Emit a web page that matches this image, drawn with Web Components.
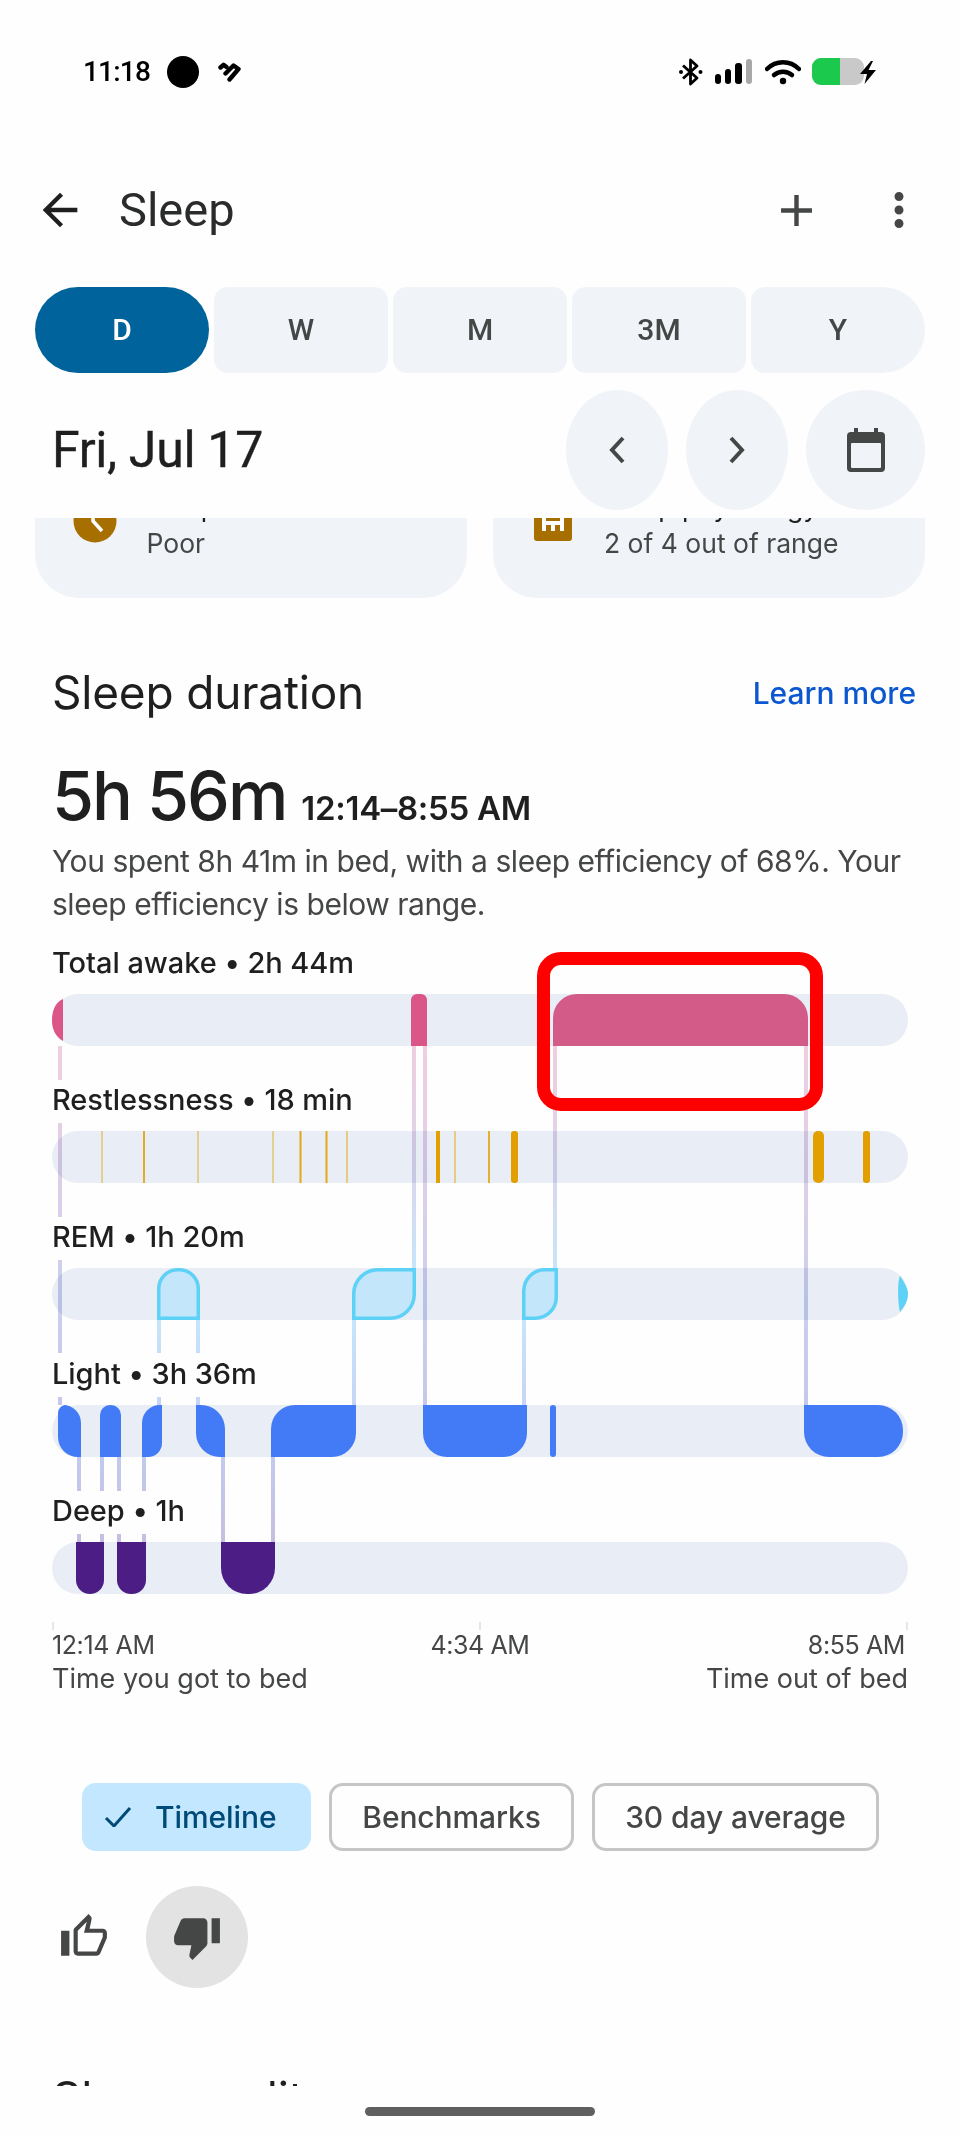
<!DOCTYPE html>
<html lang="en"><head><meta charset="utf-8"><title>Sleep</title>
<style>
html,body{margin:0;padding:0;background:#fffefe}
body{width:960px;height:2137px;overflow:hidden;font-family:Inter,"Liberation Sans",sans-serif;color:#1f1f1f}
phone-screen{display:block}
</style></head><body>
<phone-screen>
  <status-bar></status-bar>
  <app-bar title="Sleep"></app-bar>
  <range-tabs></range-tabs>
  <date-row label="Fri, Jul 17"></date-row>
  <scroll-area>
    <div style="display:grid;grid-template-columns:432px 432px;column-gap:26px;margin:-52px 35px 0 35px">
      <summary-card heading="Sleep schedule" value="Poor" icon="clock"></summary-card>
      <summary-card heading="Sleep physiology" value="2 of 4 out of range" icon="bars"></summary-card>
    </div>
    <duration-head></duration-head>
    <sleep-chart></sleep-chart>
    <chart-axis></chart-axis>
    <chip-row></chip-row>
    <feedback-row></feedback-row>
    <next-heading>Sleep quality</next-heading>
  </scroll-area>
  <home-bar></home-bar>
</phone-screen>
<script>
const def=(name,html,setup)=>customElements.define(name,class extends HTMLElement{
  connectedCallback(){ if(this.shadowRoot)return; const r=this.attachShadow({mode:'open'});
    r.innerHTML=typeof html==='function'?html(this):html; setup&&setup(r,this);}
});
const mi=(d,s,c='#444746')=>`<svg width="${s}" height="${s}" viewBox="0 0 24 24" fill="${c}" aria-hidden="true"><path d="${d}"/></svg>`;

def('phone-screen',`<style>:host{display:block;width:960px;height:2137px;overflow:hidden}</style><slot></slot>`);

def('status-bar',`<style>
:host{display:flex;align-items:center;height:144px;padding:0 0 0 83px;box-sizing:border-box}
.row{display:flex;align-items:center;width:100%;height:40px}
.t{font:500 28px/32px Roboto,sans-serif;color:#000;width:84px;letter-spacing:-.8px}
.dot{width:32px;height:32px;border-radius:50%;background:#000;flex:none}
.h{margin-left:19px;flex:none;display:block}
.rt{margin-left:auto;display:flex;align-items:center;margin-right:84px}
svg{display:block;flex:none}
</style><div class="row"><span class="t">11:18</span><span class="dot"></span>
<svg class="h" width="24" height="20" viewBox="0 0 24 20" fill="none" stroke="#000" stroke-width="4.400" stroke-linecap="round" stroke-linejoin="round"><path d="M2.500 5.500 5.500 2.800 8.500 5"/><path d="M7.500 11.500 15.500 3.500 20.500 7 11.500 17.500"/></svg>
<div class="rt">
<svg width="24" height="28" viewBox="0 0 24 28" style="margin-right:12px"><path d="M4 7.500 18 20l-6.500 6V2L18 8 4 20.500" fill="none" stroke="#000" stroke-width="2.800" stroke-linejoin="round"/><circle cx="2" cy="14" r="2"/><circle cx="21.500" cy="14" r="2"/></svg>
<svg width="38" height="26" viewBox="0 0 38 26" style="margin-right:12px"><rect x="0" y="15" width="6" height="10" rx="3"/><rect x="10" y="10" width="6" height="15" rx="3"/><rect x="20" y="4" width="7" height="21" rx="3"/><rect x="31" y="0" width="6" height="25" rx="3" fill="#a8a8a8"/></svg>
<svg width="36" height="26" viewBox="0 0 36 26" style="margin-right:11px"><path d="M2 10C11 1 25 1 34 10" fill="none" stroke="#000" stroke-width="4.500" stroke-linecap="round"/><path d="M9 16c5-4.500 13-4.500 18 0" fill="none" stroke="#000" stroke-width="4.500" stroke-linecap="round"/><circle cx="18" cy="22" r="3.200"/></svg>
<svg width="65" height="28" viewBox="0 0 65 28" style="margin-right:-1px"><defs><clipPath id="bc"><rect width="52" height="27" rx="9"/></clipPath></defs><g clip-path="url(#bc)"><rect width="52" height="27" fill="#c9c9c9"/><rect width="28" height="27" fill="#1bc94d"/></g><path d="M59 3 48 16h7l-2.500 10L64 12h-7.500l4.500-9z" fill="#000"/></svg>
</div></div>`);

def('app-bar',t=>`<style>
:host{display:flex;align-items:center;height:132px}
.b{flex:none;display:flex}
.t{font:400 47px/56px Roboto,sans-serif;color:#2a2b2b;margin-left:33px}
.r{margin-left:auto;display:flex;align-items:center}
</style>
<span class="b" style="margin-left:34px">${mi('M20 11H7.830l5.590-5.590L12 4l-8 8 8 8 1.410-1.410L7.830 13H20v-2z',52,'#1f1f1f')}</span>
<span class="t">${t.getAttribute('title')}</span>
<div class="r"><span class="b">${mi('M19 13h-6v6h-2v-6H5v-2h6V5h2v6h6v2z',53)}</span>
<span class="b" style="margin:0 34px 0 49px">${mi('M12 8c1.100 0 2-.9 2-2s-.9-2-2-2-2 .9-2 2 .9 2 2 2zm0 2c-1.100 0-2 .9-2 2s.9 2 2 2 2-.9 2-2-.9-2-2-2zm0 6c-1.100 0-2 .9-2 2s.9 2 2 2 2-.9 2-2-.9-2-2-2z',54)}</span></div>`);

def('range-tabs',`<style>
:host{display:grid;grid-template-columns:repeat(5,174px);column-gap:5px;height:86px;margin:11px 35px 0 35px}
div{display:flex;align-items:center;justify-content:center;background:#f0f4f9;color:#444746;font:500 30px/1 Roboto,sans-serif;border-radius:14px}
.on{background:#00639b;color:#fff;border-radius:43px}
.end{border-radius:14px 43px 43px 14px}
</style><div class="on">D</div><div>W</div><div>M</div><div>3M</div><div class="end">Y</div>`);

def('date-row',t=>`<style>
:host{display:flex;align-items:center;height:120px;margin:17px 35px 0 52px}
.d{font:400 50px/60px Roboto,sans-serif;color:#1f1f1f;flex:1;letter-spacing:-.3px;-webkit-text-stroke:.4px #1f1f1f}
.c{width:102px;height:120px;border-radius:50%;background:#f0f4f9;display:flex;align-items:center;justify-content:center;margin-left:18px}
.c.w{width:119px}
svg{display:block}
</style><span class="d">${t.getAttribute('label')}</span>
<span class="c"><svg width="18" height="28" viewBox="0 0 18 28"><path d="M15 2 4 14l11 12" fill="none" stroke="#444746" stroke-width="4"/></svg></span>
<span class="c"><svg width="18" height="28" viewBox="0 0 18 28"><path d="M3 2l11 12L3 26" fill="none" stroke="#444746" stroke-width="4"/></svg></span>
<span class="c w"><svg width="38" height="44" viewBox="0 0 38 44"><path d="M4 4h30a4 4 0 0 1 4 4v32a4 4 0 0 1-4 4H4a4 4 0 0 1-4-4V8a4 4 0 0 1 4-4z" fill="#444746"/><rect x="4" y="15" width="30" height="25" rx="1" fill="#f0f4f9"/><rect x="7" y="0" width="4" height="6" fill="#444746"/><rect x="27" y="0" width="4" height="6" fill="#444746"/></svg></span>`);

def('scroll-area',`<style>:host{display:block;height:1568px;margin-top:8px;overflow:hidden}</style><slot></slot>`);

def('summary-card',t=>{const ic=t.getAttribute('icon');
const svg=ic==='clock'
?`<svg width="44" height="44" viewBox="0 0 44 44"><circle cx="22" cy="22" r="21.500" fill="#a66f00"/><path d="M20 10v12l9 10" fill="none" stroke="#fff" stroke-width="3.500"/></svg>`
:`<svg width="38" height="44" viewBox="0 0 38 44"><rect width="38" height="44" rx="3" fill="#a66f00"/><path d="M10 20v14M19 24v10M28 20v14M10 26h18" fill="none" stroke="#fff" stroke-width="4"/></svg>`;
return `<style>
:host{display:block;height:132px;background:#f0f4f9;border-radius:0 0 44px 44px}
.w{display:flex;padding-top:22.500px}
.i{flex:none;width:44px;margin:10.500px 30px 0 37.500px}
.i.b{margin:8.500px 26px 0 41px}
.tx{font:400 26.500px/36px Inter,sans-serif;white-space:nowrap}
.h{color:#1f1f1f;display:block;height:36px}
.v{color:#444746;display:block}
svg{display:block}
</style><div class="w"><span class="i ${ic==='bars'?'b':''}">${svg}</span><div class="tx"><span class="h">${t.getAttribute('heading')}</span><span class="v">${t.getAttribute('value')}</span></div></div>`;});

def('duration-head',`<style>
:host{display:block;padding:0 44px 0 52px}
.top{display:flex;align-items:flex-start;justify-content:space-between;height:60px;margin-top:64.300px}
h2{margin:0;font:400 46px/60px Inter,sans-serif;color:#1f1f1f;letter-spacing:-.2px}
a{font:500 30px/62px Inter,sans-serif;color:#0b57d0;text-decoration:none}
.big{display:flex;align-items:baseline;height:76px;margin-top:35px}
.n{font:500 68px/76px Inter,sans-serif;color:#1f1f1f;letter-spacing:-2px}
.s{font:600 33px/76px Inter,sans-serif;color:#1f1f1f;margin-left:15px;letter-spacing:-.3px}
p{margin:6.400px 0 0;font:400 30px/43px Inter,sans-serif;color:#444746;letter-spacing:-.46px;white-space:nowrap}
</style><div class="top"><h2>Sleep duration</h2><a>Learn more</a></div>
<div class="big"><span class="n">5h 56m</span><span class="s">12:14–8:55 AM</span></div>
<p>You spent 8h 41m in bed, with a sleep efficiency of 68%. Your<br>sleep efficiency is below range.</p>`);

/* ---- chart ---- */
function seg(x0,x1,y0,y1,[tl,tr,br,bl]){
 const a=(r,x,y)=>`A${r} ${r} 0 0 1 ${x} ${y}`;
 return `M${x0+tl} ${y0}H${x1-tr}${a(tr,x1,y0+tr)}V${y1-br}${a(br,x1-br,y1)}H${x0+bl}${a(bl,x0,y1-bl)}V${y0+tl}${a(tl,x0+tl,y0)}Z`;
}
const T=[994,1131,1268,1405,1542].map(y=>[y,y+52]);
const pink='#dc5589',ltb='#427bf5',deep='#4c1e85',gold='#e2a000',cy='#5ed2f6',cyf='#c3e6fb';
function chartSvg(){
 let o='';
 const line=(x,y0,y1,g)=>`<rect x="${x}" y="${y0}" width="4" height="${y1-y0}" fill="url(#${g})" style="mix-blend-mode:multiply"/>`;
 [[1046,1080],[1123,1217],[1260,1353],[1397,1405]].forEach(([a,b])=>o+=line(58,a,b,'gLong'));
 o+=line(412,1046,1268,'gRem')+line(553,1046,1268,'gRem');
 o+=line(423,1046,1405,'gLong')+line(804,1046,1405,'gLong');
 [157,196].forEach(x=>{o+=line(x,1320,1353,'gRL')+line(x,1397,1405,'gRL')});
 [352,522].forEach(x=>{o+=line(x,1320,1405,'gRL')});
 [77,100,117,142].forEach(x=>{o+=line(x,1457,1491,'gLD')+line(x,1534,1542,'gLD')});
 [221,271].forEach(x=>{o+=line(x,1457,1542,'gLD')});
 const [a0,a1]=T[0];
 o+=`<path d="M63 999C54 1003 52 1013 52 1020C52 1027 54 1036 63 1041Z" fill="${pink}"/>`;
 o+=`<path d="${seg(411,427,a0,a1,[6,6,0,0])}" fill="${pink}"/>`;
 o+=`<path d="${seg(553,808,a0,a1,[24,24,0,0])}" fill="#d25b87"/>`;
 const [r0]=T[1];
 [[102,1.500,.55],[144,2,.85],[198,1.500,.55],[273,1.500,.55],[300.500,2,.9],[326.500,2,.9],[347,1.500,.6],[455,1.500,.6],[489,2,.8]].forEach(([x,w,a])=>
   o+=`<rect x="${x-w/2}" y="${r0}" width="${w}" height="52" fill="${gold}" opacity="${a}"/>`);
 o+=`<rect x="436" y="${r0}" width="4" height="52" fill="${gold}"/>`;
 [[511,7,3],[813,11,5],[863,7,3]].forEach(([x,w,rr])=>o+=`<rect x="${x}" y="${r0}" width="${w}" height="52" rx="${rr}" fill="${gold}"/>`);
 const [m0,m1]=T[2];
 const rem=(x0,x1,r)=>`<path d="${seg(x0+1.750,x1-1.750,m0+1.750,m1-1.750,r)}" fill="${cyf}" stroke="${cy}" stroke-width="3.500"/>`;
 o+=rem(157,200,[19,19,0,0])+rem(352,416,[24,0,24,0])+rem(522,558,[21,0,21,0]);
 o+=`<path d="M900 1276C905 1283 908 1289 908 1294C908 1300 905 1306 900 1312C898 1306 897 1282 900 1276Z" fill="${cy}"/>`;
 const [l0,l1]=T[3];
 [[58,81,[8,18,0,20]],[100,121,[10,10,0,0]],[142,162,[18,0,14,0]],[196,225,[0,24,0,24]],[271,356,[24,0,24,0]],[423,527,[0,0,24,24]],[550,556,[3,3,3,3]],[804,903,[0,25,25,25]]]
  .forEach(([a,b,r])=>o+=`<path d="${seg(a,b,l0,l1,r)}" fill="${ltb}"/>`);
 const [d0,d1]=T[4];
 [[76,104,[0,0,14,14]],[117,146,[0,0,14,14]],[221,275,[0,0,26,26]]].forEach(([a,b,r])=>o+=`<path d="${seg(a,b,d0,d1,r)}" fill="${deep}"/>`);
 return `<svg class="ov" width="856" height="685" viewBox="52 909 856 685" aria-hidden="true">
 <defs>
 <linearGradient id="gLong" gradientUnits="userSpaceOnUse" x1="0" y1="1046" x2="0" y2="1405"><stop offset="0" stop-color="#efcfe0"/><stop offset=".3" stop-color="#e2d0e8"/><stop offset=".7" stop-color="#cbd1ee"/><stop offset="1" stop-color="#c6c9ea"/></linearGradient>
 <linearGradient id="gRem" gradientUnits="userSpaceOnUse" x1="0" y1="1046" x2="0" y2="1268"><stop offset="0" stop-color="#efcfe0"/><stop offset=".45" stop-color="#e0d4ea"/><stop offset="1" stop-color="#c7e6fb"/></linearGradient>
 <linearGradient id="gRL" gradientUnits="userSpaceOnUse" x1="0" y1="1320" x2="0" y2="1405"><stop offset="0" stop-color="#c6e6fb"/><stop offset="1" stop-color="#c6d6f7"/></linearGradient>
 <linearGradient id="gLD" gradientUnits="userSpaceOnUse" x1="0" y1="1457" x2="0" y2="1542"><stop offset="0" stop-color="#c2cbee"/><stop offset="1" stop-color="#c5c0e2"/></linearGradient>
 </defs>${o}</svg>`;
}
def('sleep-chart',()=>`<style>
:host{display:block;position:relative;width:856px;margin:-16.600px 0 0 52px;font:500 29px/36px Inter,sans-serif;color:#1f1f1f}
.row{height:137px;display:flex;flex-direction:column;justify-content:flex-end}
.l{height:85px;box-sizing:border-box;padding-top:36px;white-space:nowrap;letter-spacing:-.05px}
.tr{height:52px;background:#e9edf5;border-radius:26px}
.ov{position:absolute;left:0;top:0;display:block;pointer-events:none}
.mark{position:absolute;left:485px;top:43px;width:286px;height:159px;box-sizing:border-box;border:13px solid #ff0000;border-radius:24px}
</style>
<div class="row"><div class="l">Total awake • 2h 44m</div><div class="tr"></div></div>
<div class="row"><div class="l">Restlessness • 18 min</div><div class="tr"></div></div>
<div class="row"><div class="l">REM • 1h 20m</div><div class="tr"></div></div>
<div class="row"><div class="l">Light • 3h 36m</div><div class="tr"></div></div>
<div class="row"><div class="l">Deep • 1h</div><div class="tr"></div></div>
${chartSvg()}<div class="mark"></div>`);

def('chart-axis',`<style>
:host{display:grid;grid-template-columns:1fr auto 1fr;margin:28px 52px 0 52px;position:relative;color:#444746;font:400 27px/34px Inter,sans-serif;padding-top:6px}
:host::before{content:"";position:absolute;left:0;right:0;top:0;height:8px;background:linear-gradient(#e6e6e6,#e6e6e6) 0 0/2px 8px no-repeat,linear-gradient(#e6e6e6,#e6e6e6) 50% 0/2px 8px no-repeat,linear-gradient(#e6e6e6,#e6e6e6) 100% 0/2px 8px no-repeat}
.r{text-align:right}
b{font:400 25px/34px Inter,sans-serif;letter-spacing:-.4px;display:block}
.r b{padding-right:3px}
</style>
<div><b>12:14 AM</b>Time you got to bed</div><div><b>4:34 AM</b></div><div class="r"><b>8:55 AM</b>Time out of bed</div>`);

def('chip-row',`<style>
:host{display:flex;margin:86.500px 0 0 81.500px;font:500 30px/1 Inter,sans-serif}
span{box-sizing:border-box;height:68px;border-radius:14px;display:flex;align-items:center;justify-content:center;color:#444746;border:3px solid #c4c7c5;letter-spacing:-.1px;white-space:nowrap}
.on{background:#c2e7ff;border:0;color:#004a77;width:229px;gap:23px;padding-left:22.500px;justify-content:flex-start}
svg{display:block;flex:none}
</style>
<span class="on"><svg width="28" height="20" viewBox="0 0 28 20"><path d="M2 11l8 8L26 1" fill="none" stroke="#004a77" stroke-width="3"/></svg>Timeline</span><span style="width:245px;margin-left:18.500px">Benchmarks</span><span style="width:287px;margin-left:18px">30 day average</span>`);

def('feedback-row',()=>`<style>
:host{display:flex;align-items:center;margin:35.500px 0 0 59px;height:102px}
.u{display:flex;width:50px;margin-right:37px}
.d{width:102px;height:102px;border-radius:50%;background:#e3e3e3;display:flex;align-items:center;justify-content:center}
</style><span class="u">${mi('M9 21h9c.83 0 1.540-.5 1.840-1.220l3.020-7.050c.09-.23.14-.47.14-.73v-2c0-1.100-.9-2-2-2h-6.310l.95-4.570.03-.32c0-.41-.17-.79-.44-1.060L14.170 1 7.580 7.590C7.220 7.950 7 8.450 7 9v10c0 1.100.9 2 2 2zM9 9l4.340-4.340L12 10h9v2l-3 7H9V9zM1 9h4v12H1z',50)}</span>
<span class="d">${mi('M15 3H6c-.83 0-1.540.5-1.840 1.220l-3.020 7.050c-.09.23-.14.47-.14.73v2c0 1.100.9 2 2 2h6.310l-.95 4.570-.03.32c0 .41.17.79.44 1.060L9.830 23l6.590-6.590c.36-.36.58-.86.58-1.410V5c0-1.100-.9-2-2-2zm4 0v12h4V3h-4z',50)}</span>`);

def('next-heading',`<style>:host{display:block;margin:79.700px 0 0 52px;font:400 46px/60px Inter,sans-serif;color:#1f1f1f;letter-spacing:-.2px}</style><slot></slot>`);

def('home-bar',`<style>:host{display:block;width:230px;height:9px;margin:21px auto 0;background:#5f5f5f;border-radius:5px}</style>`);
</script>
</body></html>
